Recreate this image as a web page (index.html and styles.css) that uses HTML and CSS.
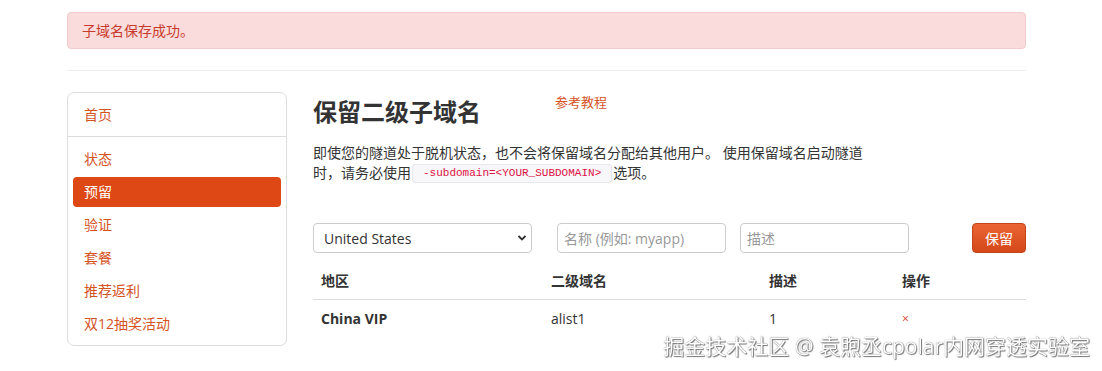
FILE: index.html
```html
<!DOCTYPE html>
<html lang="zh-CN">

<head>
    <meta charset="UTF-8">
    <meta name="viewport" content="width=device-width, initial-scale=1.0">
    <title>保留二级子域名</title>
    <link rel="stylesheet" href="styles.css">
</head>

<body>
    <div class="container">
        <div class="alert">子域名保存成功。</div>
        <hr class="divider">

        <div class="row">
            <div class="sidebar">
                <ul class="nav-list">
                    <li class="nav-home"><a href="#">首页</a></li>
                    <li><a href="#">状态</a></li>
                    <li class="active"><a href="#">预留</a></li>
                    <li><a href="#">验证</a></li>
                    <li><a href="#">套餐</a></li>
                    <li><a href="#">推荐返利</a></li>
                    <li><a href="#">双12抽奖活动</a></li>
                </ul>
            </div>

            <div class="main">
                <div class="page-head">
                    <h2>保留二级子域名</h2>
                    <a class="guide" href="#">参考教程</a>
                </div>
                <p class="intro">即使您的隧道处于脱机状态，也不会将保留域名分配给其他用户。 使用保留域名启动隧道时，请务必使用<code>-subdomain=&lt;YOUR_SUBDOMAIN&gt;</code>选项。</p>

                <form class="reserve-form">
                    <div class="select-wrap">
                        <select class="region">
                            <option>United States</option>
                            <option>China VIP</option>
                        </select>
                        <svg class="chevron" width="10" height="8" viewBox="0 0 10 8">
                            <path d="M1.5 2 L5 5.5 L8.5 2" fill="none" stroke="#333" stroke-width="1.8"/>
                        </svg>
                    </div>
                    <input class="name" type="text" placeholder="名称 (例如: myapp)">
                    <input class="desc" type="text" placeholder="描述">
                    <button type="submit">保留</button>
                </form>

                <table class="domains">
                    <thead>
                        <tr>
                            <th class="col-region">地区</th>
                            <th class="col-sub">二级域名</th>
                            <th class="col-desc">描述</th>
                            <th>操作</th>
                        </tr>
                    </thead>
                    <tbody>
                        <tr>
                            <td class="strong">China VIP</td>
                            <td>alist1</td>
                            <td>1</td>
                            <td><a class="remove" href="#">×</a></td>
                        </tr>
                    </tbody>
                </table>
            </div>
        </div>
    </div>

    <div class="watermark">掘金技术社区 @ 袁煦丞cpolar内网穿透实验室</div>
</body>

</html>
```

FILE: styles.css
```css
/* Global Reset */
* {
    box-sizing: border-box;
    margin: 0;
    padding: 0;
}

body {
    font-family: "Open Sans", "Noto Sans CJK SC", sans-serif;
    font-size: 14px;
    line-height: 20px;
    color: #333;
    background-color: #fff;
}

a {
    text-decoration: none;
}

.container {
    width: 959px;
    margin-left: 67px;
    padding-top: 12px;
}

.alert {
    padding: 8px 14px;
    line-height: 19px;
    background-color: #fadcdc;
    border: 1px solid #f2cccc;
    border-radius: 4px;
    color: #c83a2c;
}

.divider {
    border: none;
    border-top: 1px solid #eee;
    margin: 21px 0;
}

.row {
    display: flex;
    align-items: flex-start;
    gap: 26px;
}

/* Sidebar */
.sidebar {
    width: 220px;
    border: 1px solid #ddd;
    border-radius: 7px;
    padding-bottom: 6px;
}

.nav-list {
    list-style: none;
}

.nav-list li {
    margin: 0 5px 3px;
}

.nav-list li a {
    display: block;
    height: 30px;
    line-height: 30px;
    padding-left: 11px;
    color: #d4531f;
    border-radius: 4px;
}

.nav-list .nav-home {
    margin: 0 0 7px;
    border-bottom: 1px solid #ddd;
}

.nav-list .nav-home a {
    height: 43px;
    line-height: 43px;
    padding-left: 16px;
}

.nav-list li:last-child {
    margin-bottom: 0;
}

.nav-list .active a {
    background-color: #dd4814;
    color: #fff;
}

/* Main column */
.main {
    flex: 1;
}

.page-head {
    display: flex;
    align-items: flex-start;
    padding-top: 5px;
}

.page-head h2 {
    font-size: 24px;
    line-height: 30px;
    font-weight: bold;
    color: #333;
}

.guide {
    margin-left: 74px;
    margin-top: -5px;
    font-size: 13px;
    color: #d4531f;
}

.intro {
    width: 560px;
    margin-top: 16px;
}

.intro code {
    display: inline-block;
    vertical-align: top;
    font-family: "Liberation Mono", monospace;
    font-size: 11px;
    line-height: 17px;
    color: #dd1144;
    background-color: #f7f7f9;
    border: 1px solid #e6e6ec;
    border-radius: 3px;
    padding: 0 10px;
    margin: 1px 1px 0;
}

/* Form */
.reserve-form {
    display: flex;
    margin-top: 40px;
}

.select-wrap {
    position: relative;
    width: 219px;
}

.region {
    width: 100%;
    height: 30px;
    padding: 0 10px;
    font-family: inherit;
    font-size: 14px;
    color: #333;
    background-color: #fff;
    border: 1px solid #ccc;
    border-radius: 4px;
    appearance: none;
}

.chevron {
    position: absolute;
    right: 5px;
    top: 11px;
    pointer-events: none;
}

.reserve-form input {
    width: 169px;
    height: 30px;
    padding: 0 6px;
    font-family: inherit;
    font-size: 14px;
    border: 1px solid #ccc;
    border-radius: 4px;
}

.reserve-form input::placeholder {
    color: #999;
}

.reserve-form .name {
    margin-left: 25px;
}

.reserve-form .desc {
    margin-left: 14px;
}

.reserve-form button {
    margin-left: auto;
    width: 54px;
    height: 30px;
    font-family: inherit;
    font-size: 14px;
    color: #fff;
    background: linear-gradient(#eb6533, #d4481a);
    border: 1px solid #c4441a;
    border-radius: 4px;
    cursor: pointer;
}

/* Table */
.domains {
    width: 100%;
    margin-top: 10px;
    border-collapse: collapse;
}

.domains th,
.domains td {
    text-align: left;
    padding: 8px;
    line-height: 20px;
}

.domains th {
    font-weight: bold;
    border-bottom: 1px solid #ddd;
}

.col-region {
    width: 230px;
}

.col-sub {
    width: 218px;
}

.col-desc {
    width: 133px;
}

.domains .strong {
    font-weight: bold;
}

.remove {
    color: #d9362b;
    font-size: 12px;
}

.watermark {
    position: fixed;
    right: 12px;
    bottom: 13px;
    font-size: 21px;
    line-height: 24px;
    color: #fff;
    text-shadow: 0 0 1px #555, 1px 1px 1px #777;
}
```
